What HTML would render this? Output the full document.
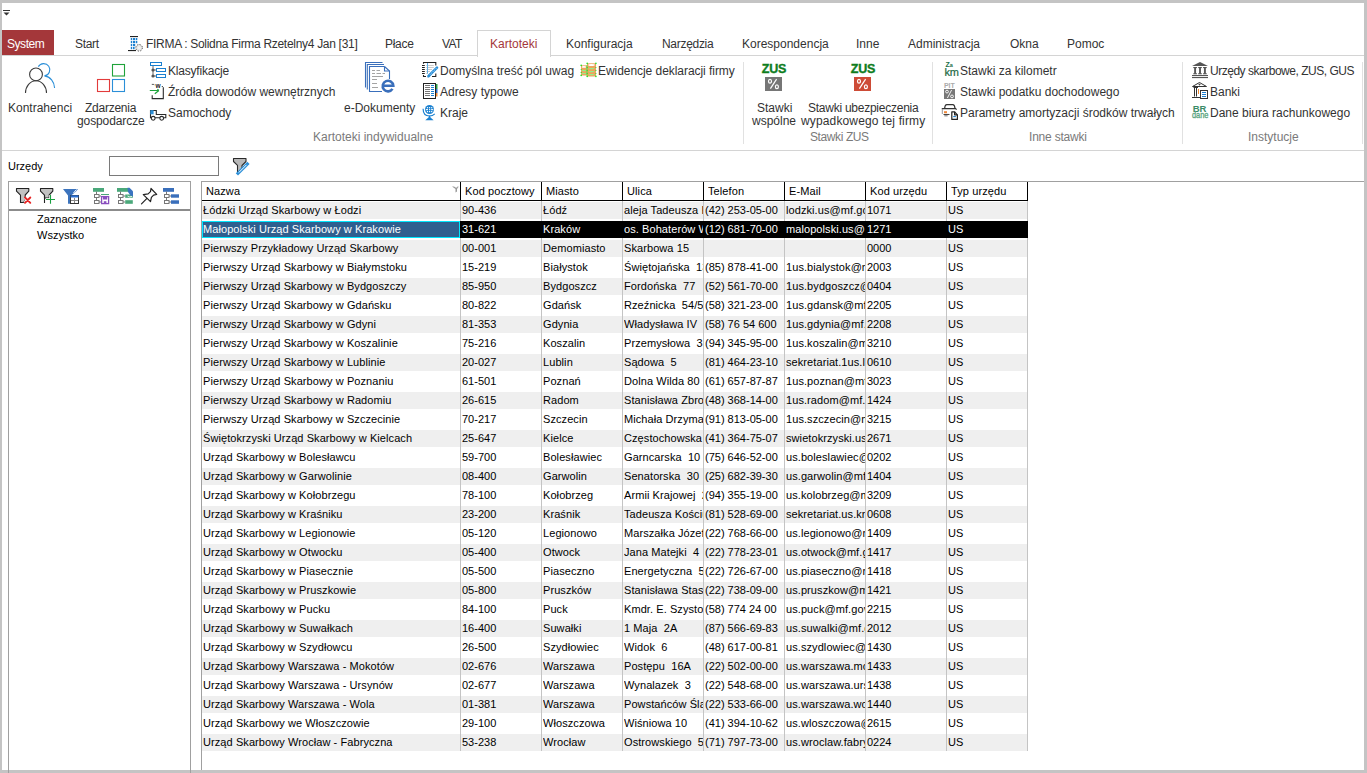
<!DOCTYPE html>
<html><head><meta charset="utf-8"><style>
*{margin:0;padding:0;box-sizing:content-box}
body{width:1367px;height:773px;position:relative;overflow:hidden;background:#fff;font-family:"Liberation Sans",sans-serif;color:#000}
.a{position:absolute}
.t{position:absolute;font-size:12px;line-height:14px;white-space:nowrap;color:#333}
.tab{position:absolute;top:37px;font-size:12px;line-height:14px;white-space:nowrap;color:#333}
.hc{position:absolute;top:185px;font-size:11px;line-height:13px;white-space:nowrap;overflow:hidden;letter-spacing:0.1px}
.c{position:absolute;height:17px;font-size:11px;line-height:17px;white-space:pre;overflow:hidden;letter-spacing:0.08px}
.c.n{letter-spacing:0}
.sep{position:absolute;top:62px;width:1px;height:82px;background:#e1e1e1}
.gl{position:absolute;top:130px;font-size:12px;line-height:14px;white-space:nowrap;color:#7a7a7a}
svg{position:absolute;overflow:visible}
</style></head><body>
<!-- frame -->
<div class="a" style="left:0;top:0;width:1367px;height:3px;background:#c4c4c4"></div>
<div class="a" style="left:0;top:0;width:2px;height:773px;background:#c4c4c4"></div>
<div class="a" style="left:1364px;top:0;width:3px;height:773px;background:#c4c4c4"></div>
<div class="a" style="left:0;top:770px;width:1367px;height:3px;background:#c4c4c4"></div>

<!-- quick access -->
<div class="a" style="left:3px;top:10px;width:7px;height:1px;background:#333"></div>
<svg style="left:3px;top:12px" width="7" height="4"><path d="M0.5 0.5 L6.5 0.5 L3.5 3.5 Z" fill="#333"/></svg>

<!-- tab strip -->
<div class="a" style="left:2px;top:55px;width:1362px;height:1px;background:#d4d4d4"></div>
<div class="a" style="left:2px;top:30px;width:52px;height:25px;background:#a4373a"></div>
<div class="tab" style="left:7px;color:#fff;letter-spacing:-0.45px">System</div>
<div class="tab" style="left:75px;letter-spacing:-0.3px">Start</div>
<div class="tab" style="left:146px;letter-spacing:-0.3px">FIRMA : Solidna Firma Rzetelny4 Jan [31]</div>
<div class="tab" style="left:385px;letter-spacing:-0.3px">Płace</div>
<div class="tab" style="left:442px;letter-spacing:-0.6px">VAT</div>
<div class="a" style="left:477px;top:30px;width:72px;height:26px;border:1px solid #d4d4d4;border-bottom:none;background:#fff"></div>
<div class="tab" style="left:490px;color:#a4373a">Kartoteki</div>
<div class="tab" style="left:566px">Konfiguracja</div>
<div class="tab" style="left:662px;letter-spacing:-0.3px">Narzędzia</div>
<div class="tab" style="left:742px">Korespondencja</div>
<div class="tab" style="left:856px">Inne</div>
<div class="tab" style="left:908px">Administracja</div>
<div class="tab" style="left:1010px">Okna</div>
<div class="tab" style="left:1067px">Pomoc</div>

<!-- ribbon -->
<div class="a" style="left:2px;top:150px;width:1362px;height:1px;background:#d4d4d4"></div>
<div class="t" style="left:8px;top:101px">Kontrahenci</div>
<div class="t" style="left:85px;top:101px;letter-spacing:-0.25px">Zdarzenia</div>
<div class="t" style="left:77px;top:114px;letter-spacing:-0.1px">gospodarcze</div>
<div class="t" style="left:168px;top:64px;letter-spacing:-0.2px">Klasyfikacje</div>
<div class="t" style="left:168px;top:85px">Źródła dowodów wewnętrznych</div>
<div class="t" style="left:168px;top:106px">Samochody</div>
<div class="t" style="left:344px;top:101px">e-Dokumenty</div>
<div class="t" style="left:440px;top:64px">Domyślna treść pól uwag</div>
<div class="t" style="left:440px;top:85px">Adresy typowe</div>
<div class="t" style="left:440px;top:106px">Kraje</div>
<div class="t" style="left:598px;top:64px;letter-spacing:-0.05px">Ewidencje deklaracji firmy</div>
<div class="gl" style="left:313px">Kartoteki indywidualne</div>
<div class="sep" style="left:743px"></div>
<div class="t" style="left:757px;top:101px">Stawki</div>
<div class="t" style="left:752px;top:114px">wspólne</div>
<div class="t" style="left:808px;top:101px;letter-spacing:-0.25px">Stawki ubezpieczenia</div>
<div class="t" style="left:801px;top:114px;letter-spacing:0.14px">wypadkowego tej firmy</div>
<div class="gl" style="left:810px;letter-spacing:-0.4px">Stawki ZUS</div>
<div class="sep" style="left:932px"></div>
<div class="t" style="left:960px;top:64px">Stawki za kilometr</div>
<div class="t" style="left:960px;top:85px">Stawki podatku dochodowego</div>
<div class="t" style="left:960px;top:106px">Parametry amortyzacji środków trwałych</div>
<div class="gl" style="left:1029px;letter-spacing:-0.2px">Inne stawki</div>
<div class="sep" style="left:1182px"></div>
<div class="t" style="left:1210px;top:64px;letter-spacing:-0.48px">Urzędy skarbowe, ZUS, GUS</div>
<div class="t" style="left:1210px;top:85px">Banki</div>
<div class="t" style="left:1210px;top:106px">Dane biura rachunkowego</div>
<div class="gl" style="left:1248px">Instytucje</div>
<div class="sep" style="left:1362px"></div>

<!-- filter row -->
<div class="a" style="left:8px;top:160px;font-size:11px;line-height:13px">Urzędy</div>
<div class="a" style="left:109px;top:156px;width:108px;height:18px;border:1px solid #7a7a7a;background:#fff"></div>

<!-- left panel -->
<div class="a" style="left:8px;top:181px;width:181px;height:600px;border:1px solid #a0a0a0;border-bottom:none"></div>
<div class="a" style="left:9px;top:209px;width:181px;height:2px;background:#8c8c8c"></div>
<div class="a" style="left:37px;top:212px;font-size:11px;line-height:14px">Zaznaczone</div>
<div class="a" style="left:37px;top:228px;font-size:11px;line-height:14px">Wszystko</div>

<!-- grid frame -->
<div class="a" style="left:201px;top:181px;width:1163px;height:1px;background:#a0a0a0"></div>
<div class="a" style="left:201px;top:181px;width:1px;height:589px;background:#a0a0a0"></div>
<div class="hc" style="left:206px;width:254px">Nazwa</div>
<div class="hc" style="left:465px;width:76px">Kod pocztowy</div>
<div class="hc" style="left:546px;width:76px">Miasto</div>
<div class="hc" style="left:627px;width:76px">Ulica</div>
<div class="hc" style="left:708px;width:76px">Telefon</div>
<div class="hc" style="left:789px;width:76px">E-Mail</div>
<div class="hc" style="left:870px;width:76px">Kod urzędu</div>
<div class="hc" style="left:951px;width:76px">Typ urzędu</div>
<div style="position:absolute;left:460px;top:182px;width:1px;height:19px;background:#000"></div>
<div style="position:absolute;left:541px;top:182px;width:1px;height:19px;background:#000"></div>
<div style="position:absolute;left:622px;top:182px;width:1px;height:19px;background:#000"></div>
<div style="position:absolute;left:703px;top:182px;width:1px;height:19px;background:#000"></div>
<div style="position:absolute;left:784px;top:182px;width:1px;height:19px;background:#000"></div>
<div style="position:absolute;left:865px;top:182px;width:1px;height:19px;background:#000"></div>
<div style="position:absolute;left:946px;top:182px;width:1px;height:19px;background:#000"></div>
<div style="position:absolute;left:1027px;top:182px;width:1px;height:19px;background:#000"></div>
<div style="position:absolute;left:202px;top:200px;width:826px;height:1px;background:#000"></div>
<div style="position:absolute;left:202px;top:202px;width:825px;height:17px;background:#efefef"></div>
<div class="c" style="left:203px;top:202px;width:257px;">Łódzki Urząd Skarbowy w Łodzi</div>
<div class="c n" style="left:462px;top:202px;width:79px;">90-436</div>
<div class="c" style="left:543px;top:202px;width:79px;">Łódź</div>
<div class="c" style="left:624px;top:202px;width:79px;">aleja Tadeusza Kościuszki 83</div>
<div class="c n" style="left:705px;top:202px;width:79px;">(42) 253-05-00</div>
<div class="c" style="left:786px;top:202px;width:79px;">lodzki.us@mf.gov.pl</div>
<div class="c n" style="left:867px;top:202px;width:79px;">1071</div>
<div class="c n" style="left:948px;top:202px;width:79px;">US</div>
<div style="position:absolute;left:460px;top:221px;width:568px;height:17px;background:#000"></div>
<div style="position:absolute;left:202px;top:221px;width:256px;height:15px;background:#2f5f8f;border:1px solid #00e8ff"></div>
<div class="c" style="left:203px;top:221px;width:257px;color:#fff;">Małopolski Urząd Skarbowy w Krakowie</div>
<div class="c n" style="left:462px;top:221px;width:79px;color:#fff;">31-621</div>
<div class="c" style="left:543px;top:221px;width:79px;color:#fff;">Kraków</div>
<div class="c" style="left:624px;top:221px;width:79px;color:#fff;">os. Bohaterów Września 20</div>
<div class="c n" style="left:705px;top:221px;width:79px;color:#fff;">(12) 681-70-00</div>
<div class="c" style="left:786px;top:221px;width:79px;color:#fff;">malopolski.us@mf.gov.pl</div>
<div class="c n" style="left:867px;top:221px;width:79px;color:#fff;">1271</div>
<div class="c n" style="left:948px;top:221px;width:79px;color:#fff;">US</div>
<div style="position:absolute;left:202px;top:240px;width:825px;height:17px;background:#efefef"></div>
<div class="c" style="left:203px;top:240px;width:257px;">Pierwszy Przykładowy Urząd Skarbowy</div>
<div class="c n" style="left:462px;top:240px;width:79px;">00-001</div>
<div class="c" style="left:543px;top:240px;width:79px;">Demomiasto</div>
<div class="c" style="left:624px;top:240px;width:79px;">Skarbowa 15</div>
<div class="c n" style="left:705px;top:240px;width:79px;"></div>
<div class="c" style="left:786px;top:240px;width:79px;"></div>
<div class="c n" style="left:867px;top:240px;width:79px;">0000</div>
<div class="c n" style="left:948px;top:240px;width:79px;">US</div>
<div class="c" style="left:203px;top:259px;width:257px;">Pierwszy Urząd Skarbowy w Białymstoku</div>
<div class="c n" style="left:462px;top:259px;width:79px;">15-219</div>
<div class="c" style="left:543px;top:259px;width:79px;">Białystok</div>
<div class="c" style="left:624px;top:259px;width:79px;">Świętojańska  13</div>
<div class="c n" style="left:705px;top:259px;width:79px;">(85) 878-41-00</div>
<div class="c" style="left:786px;top:259px;width:79px;">1us.bialystok@mf.gov.pl</div>
<div class="c n" style="left:867px;top:259px;width:79px;">2003</div>
<div class="c n" style="left:948px;top:259px;width:79px;">US</div>
<div style="position:absolute;left:202px;top:278px;width:825px;height:17px;background:#efefef"></div>
<div class="c" style="left:203px;top:278px;width:257px;">Pierwszy Urząd Skarbowy w Bydgoszczy</div>
<div class="c n" style="left:462px;top:278px;width:79px;">85-950</div>
<div class="c" style="left:543px;top:278px;width:79px;">Bydgoszcz</div>
<div class="c" style="left:624px;top:278px;width:79px;">Fordońska  77</div>
<div class="c n" style="left:705px;top:278px;width:79px;">(52) 561-70-00</div>
<div class="c" style="left:786px;top:278px;width:79px;">1us.bydgoszcz@mf.gov.pl</div>
<div class="c n" style="left:867px;top:278px;width:79px;">0404</div>
<div class="c n" style="left:948px;top:278px;width:79px;">US</div>
<div class="c" style="left:203px;top:297px;width:257px;">Pierwszy Urząd Skarbowy w Gdańsku</div>
<div class="c n" style="left:462px;top:297px;width:79px;">80-822</div>
<div class="c" style="left:543px;top:297px;width:79px;">Gdańsk</div>
<div class="c" style="left:624px;top:297px;width:79px;">Rzeźnicka  54/56</div>
<div class="c n" style="left:705px;top:297px;width:79px;">(58) 321-23-00</div>
<div class="c" style="left:786px;top:297px;width:79px;">1us.gdansk@mf.gov.pl</div>
<div class="c n" style="left:867px;top:297px;width:79px;">2205</div>
<div class="c n" style="left:948px;top:297px;width:79px;">US</div>
<div style="position:absolute;left:202px;top:316px;width:825px;height:17px;background:#efefef"></div>
<div class="c" style="left:203px;top:316px;width:257px;">Pierwszy Urząd Skarbowy w Gdyni</div>
<div class="c n" style="left:462px;top:316px;width:79px;">81-353</div>
<div class="c" style="left:543px;top:316px;width:79px;">Gdynia</div>
<div class="c" style="left:624px;top:316px;width:79px;">Władysława IV</div>
<div class="c n" style="left:705px;top:316px;width:79px;">(58) 76 54 600</div>
<div class="c" style="left:786px;top:316px;width:79px;">1us.gdynia@mf.gov.pl</div>
<div class="c n" style="left:867px;top:316px;width:79px;">2208</div>
<div class="c n" style="left:948px;top:316px;width:79px;">US</div>
<div class="c" style="left:203px;top:335px;width:257px;">Pierwszy Urząd Skarbowy w Koszalinie</div>
<div class="c n" style="left:462px;top:335px;width:79px;">75-216</div>
<div class="c" style="left:543px;top:335px;width:79px;">Koszalin</div>
<div class="c" style="left:624px;top:335px;width:79px;">Przemysłowa  3</div>
<div class="c n" style="left:705px;top:335px;width:79px;">(94) 345-95-00</div>
<div class="c" style="left:786px;top:335px;width:79px;">1us.koszalin@mf.gov.pl</div>
<div class="c n" style="left:867px;top:335px;width:79px;">3210</div>
<div class="c n" style="left:948px;top:335px;width:79px;">US</div>
<div style="position:absolute;left:202px;top:354px;width:825px;height:17px;background:#efefef"></div>
<div class="c" style="left:203px;top:354px;width:257px;">Pierwszy Urząd Skarbowy w Lublinie</div>
<div class="c n" style="left:462px;top:354px;width:79px;">20-027</div>
<div class="c" style="left:543px;top:354px;width:79px;">Lublin</div>
<div class="c" style="left:624px;top:354px;width:79px;">Sądowa  5</div>
<div class="c n" style="left:705px;top:354px;width:79px;">(81) 464-23-10</div>
<div class="c" style="left:786px;top:354px;width:79px;">sekretariat.1us.lublin@mf.gov.pl</div>
<div class="c n" style="left:867px;top:354px;width:79px;">0610</div>
<div class="c n" style="left:948px;top:354px;width:79px;">US</div>
<div class="c" style="left:203px;top:373px;width:257px;">Pierwszy Urząd Skarbowy w Poznaniu</div>
<div class="c n" style="left:462px;top:373px;width:79px;">61-501</div>
<div class="c" style="left:543px;top:373px;width:79px;">Poznań</div>
<div class="c" style="left:624px;top:373px;width:79px;">Dolna Wilda 80</div>
<div class="c n" style="left:705px;top:373px;width:79px;">(61) 657-87-87</div>
<div class="c" style="left:786px;top:373px;width:79px;">1us.poznan@mf.gov.pl</div>
<div class="c n" style="left:867px;top:373px;width:79px;">3023</div>
<div class="c n" style="left:948px;top:373px;width:79px;">US</div>
<div style="position:absolute;left:202px;top:392px;width:825px;height:17px;background:#efefef"></div>
<div class="c" style="left:203px;top:392px;width:257px;">Pierwszy Urząd Skarbowy w Radomiu</div>
<div class="c n" style="left:462px;top:392px;width:79px;">26-615</div>
<div class="c" style="left:543px;top:392px;width:79px;">Radom</div>
<div class="c" style="left:624px;top:392px;width:79px;">Stanisława Zbrożka</div>
<div class="c n" style="left:705px;top:392px;width:79px;">(48) 368-14-00</div>
<div class="c" style="left:786px;top:392px;width:79px;">1us.radom@mf.gov.pl</div>
<div class="c n" style="left:867px;top:392px;width:79px;">1424</div>
<div class="c n" style="left:948px;top:392px;width:79px;">US</div>
<div class="c" style="left:203px;top:411px;width:257px;">Pierwszy Urząd Skarbowy w Szczecinie</div>
<div class="c n" style="left:462px;top:411px;width:79px;">70-217</div>
<div class="c" style="left:543px;top:411px;width:79px;">Szczecin</div>
<div class="c" style="left:624px;top:411px;width:79px;">Michała Drzymały</div>
<div class="c n" style="left:705px;top:411px;width:79px;">(91) 813-05-00</div>
<div class="c" style="left:786px;top:411px;width:79px;">1us.szczecin@mf.gov.pl</div>
<div class="c n" style="left:867px;top:411px;width:79px;">3215</div>
<div class="c n" style="left:948px;top:411px;width:79px;">US</div>
<div style="position:absolute;left:202px;top:430px;width:825px;height:17px;background:#efefef"></div>
<div class="c" style="left:203px;top:430px;width:257px;">Świętokrzyski Urząd Skarbowy w Kielcach</div>
<div class="c n" style="left:462px;top:430px;width:79px;">25-647</div>
<div class="c" style="left:543px;top:430px;width:79px;">Kielce</div>
<div class="c" style="left:624px;top:430px;width:79px;">Częstochowska</div>
<div class="c n" style="left:705px;top:430px;width:79px;">(41) 364-75-07</div>
<div class="c" style="left:786px;top:430px;width:79px;">swietokrzyski.us@mf.gov.pl</div>
<div class="c n" style="left:867px;top:430px;width:79px;">2671</div>
<div class="c n" style="left:948px;top:430px;width:79px;">US</div>
<div class="c" style="left:203px;top:449px;width:257px;">Urząd Skarbowy w Bolesławcu</div>
<div class="c n" style="left:462px;top:449px;width:79px;">59-700</div>
<div class="c" style="left:543px;top:449px;width:79px;">Bolesławiec</div>
<div class="c" style="left:624px;top:449px;width:79px;">Garncarska  10</div>
<div class="c n" style="left:705px;top:449px;width:79px;">(75) 646-52-00</div>
<div class="c" style="left:786px;top:449px;width:79px;">us.boleslawiec@mf.gov.pl</div>
<div class="c n" style="left:867px;top:449px;width:79px;">0202</div>
<div class="c n" style="left:948px;top:449px;width:79px;">US</div>
<div style="position:absolute;left:202px;top:468px;width:825px;height:17px;background:#efefef"></div>
<div class="c" style="left:203px;top:468px;width:257px;">Urząd Skarbowy w Garwolinie</div>
<div class="c n" style="left:462px;top:468px;width:79px;">08-400</div>
<div class="c" style="left:543px;top:468px;width:79px;">Garwolin</div>
<div class="c" style="left:624px;top:468px;width:79px;">Senatorska  30</div>
<div class="c n" style="left:705px;top:468px;width:79px;">(25) 682-39-30</div>
<div class="c" style="left:786px;top:468px;width:79px;">us.garwolin@mf.gov.pl</div>
<div class="c n" style="left:867px;top:468px;width:79px;">1404</div>
<div class="c n" style="left:948px;top:468px;width:79px;">US</div>
<div class="c" style="left:203px;top:487px;width:257px;">Urząd Skarbowy w Kołobrzegu</div>
<div class="c n" style="left:462px;top:487px;width:79px;">78-100</div>
<div class="c" style="left:543px;top:487px;width:79px;">Kołobrzeg</div>
<div class="c" style="left:624px;top:487px;width:79px;">Armii Krajowej  2</div>
<div class="c n" style="left:705px;top:487px;width:79px;">(94) 355-19-00</div>
<div class="c" style="left:786px;top:487px;width:79px;">us.kolobrzeg@mf.gov.pl</div>
<div class="c n" style="left:867px;top:487px;width:79px;">3209</div>
<div class="c n" style="left:948px;top:487px;width:79px;">US</div>
<div style="position:absolute;left:202px;top:506px;width:825px;height:17px;background:#efefef"></div>
<div class="c" style="left:203px;top:506px;width:257px;">Urząd Skarbowy w Kraśniku</div>
<div class="c n" style="left:462px;top:506px;width:79px;">23-200</div>
<div class="c" style="left:543px;top:506px;width:79px;">Kraśnik</div>
<div class="c" style="left:624px;top:506px;width:79px;">Tadeusza Kościuszki</div>
<div class="c n" style="left:705px;top:506px;width:79px;">(81) 528-69-00</div>
<div class="c" style="left:786px;top:506px;width:79px;">sekretariat.us.krasnik@mf.gov.pl</div>
<div class="c n" style="left:867px;top:506px;width:79px;">0608</div>
<div class="c n" style="left:948px;top:506px;width:79px;">US</div>
<div class="c" style="left:203px;top:525px;width:257px;">Urząd Skarbowy w Legionowie</div>
<div class="c n" style="left:462px;top:525px;width:79px;">05-120</div>
<div class="c" style="left:543px;top:525px;width:79px;">Legionowo</div>
<div class="c" style="left:624px;top:525px;width:79px;">Marszałka Józefa Piłsudskiego</div>
<div class="c n" style="left:705px;top:525px;width:79px;">(22) 768-66-00</div>
<div class="c" style="left:786px;top:525px;width:79px;">us.legionowo@mf.gov.pl</div>
<div class="c n" style="left:867px;top:525px;width:79px;">1409</div>
<div class="c n" style="left:948px;top:525px;width:79px;">US</div>
<div style="position:absolute;left:202px;top:544px;width:825px;height:17px;background:#efefef"></div>
<div class="c" style="left:203px;top:544px;width:257px;">Urząd Skarbowy w Otwocku</div>
<div class="c n" style="left:462px;top:544px;width:79px;">05-400</div>
<div class="c" style="left:543px;top:544px;width:79px;">Otwock</div>
<div class="c" style="left:624px;top:544px;width:79px;">Jana Matejki  4</div>
<div class="c n" style="left:705px;top:544px;width:79px;">(22) 778-23-01</div>
<div class="c" style="left:786px;top:544px;width:79px;">us.otwock@mf.gov.pl</div>
<div class="c n" style="left:867px;top:544px;width:79px;">1417</div>
<div class="c n" style="left:948px;top:544px;width:79px;">US</div>
<div class="c" style="left:203px;top:563px;width:257px;">Urząd Skarbowy w Piasecznie</div>
<div class="c n" style="left:462px;top:563px;width:79px;">05-500</div>
<div class="c" style="left:543px;top:563px;width:79px;">Piaseczno</div>
<div class="c" style="left:624px;top:563px;width:79px;">Energetyczna  5</div>
<div class="c n" style="left:705px;top:563px;width:79px;">(22) 726-67-00</div>
<div class="c" style="left:786px;top:563px;width:79px;">us.piaseczno@mf.gov.pl</div>
<div class="c n" style="left:867px;top:563px;width:79px;">1418</div>
<div class="c n" style="left:948px;top:563px;width:79px;">US</div>
<div style="position:absolute;left:202px;top:582px;width:825px;height:17px;background:#efefef"></div>
<div class="c" style="left:203px;top:582px;width:257px;">Urząd Skarbowy w Pruszkowie</div>
<div class="c n" style="left:462px;top:582px;width:79px;">05-800</div>
<div class="c" style="left:543px;top:582px;width:79px;">Pruszków</div>
<div class="c" style="left:624px;top:582px;width:79px;">Stanisława Staszica</div>
<div class="c n" style="left:705px;top:582px;width:79px;">(22) 738-09-00</div>
<div class="c" style="left:786px;top:582px;width:79px;">us.pruszkow@mf.gov.pl</div>
<div class="c n" style="left:867px;top:582px;width:79px;">1421</div>
<div class="c n" style="left:948px;top:582px;width:79px;">US</div>
<div class="c" style="left:203px;top:601px;width:257px;">Urząd Skarbowy w Pucku</div>
<div class="c n" style="left:462px;top:601px;width:79px;">84-100</div>
<div class="c" style="left:543px;top:601px;width:79px;">Puck</div>
<div class="c" style="left:624px;top:601px;width:79px;">Kmdr. E. Szystowskiego</div>
<div class="c n" style="left:705px;top:601px;width:79px;">(58) 774 24 00</div>
<div class="c" style="left:786px;top:601px;width:79px;">us.puck@mf.gov.pl</div>
<div class="c n" style="left:867px;top:601px;width:79px;">2215</div>
<div class="c n" style="left:948px;top:601px;width:79px;">US</div>
<div style="position:absolute;left:202px;top:620px;width:825px;height:17px;background:#efefef"></div>
<div class="c" style="left:203px;top:620px;width:257px;">Urząd Skarbowy w Suwałkach</div>
<div class="c n" style="left:462px;top:620px;width:79px;">16-400</div>
<div class="c" style="left:543px;top:620px;width:79px;">Suwałki</div>
<div class="c" style="left:624px;top:620px;width:79px;">1 Maja  2A</div>
<div class="c n" style="left:705px;top:620px;width:79px;">(87) 566-69-83</div>
<div class="c" style="left:786px;top:620px;width:79px;">us.suwalki@mf.gov.pl</div>
<div class="c n" style="left:867px;top:620px;width:79px;">2012</div>
<div class="c n" style="left:948px;top:620px;width:79px;">US</div>
<div class="c" style="left:203px;top:639px;width:257px;">Urząd Skarbowy w Szydłowcu</div>
<div class="c n" style="left:462px;top:639px;width:79px;">26-500</div>
<div class="c" style="left:543px;top:639px;width:79px;">Szydłowiec</div>
<div class="c" style="left:624px;top:639px;width:79px;">Widok  6</div>
<div class="c n" style="left:705px;top:639px;width:79px;">(48) 617-00-81</div>
<div class="c" style="left:786px;top:639px;width:79px;">us.szydlowiec@mf.gov.pl</div>
<div class="c n" style="left:867px;top:639px;width:79px;">1430</div>
<div class="c n" style="left:948px;top:639px;width:79px;">US</div>
<div style="position:absolute;left:202px;top:658px;width:825px;height:17px;background:#efefef"></div>
<div class="c" style="left:203px;top:658px;width:257px;">Urząd Skarbowy Warszawa - Mokotów</div>
<div class="c n" style="left:462px;top:658px;width:79px;">02-676</div>
<div class="c" style="left:543px;top:658px;width:79px;">Warszawa</div>
<div class="c" style="left:624px;top:658px;width:79px;">Postępu  16A</div>
<div class="c n" style="left:705px;top:658px;width:79px;">(22) 502-00-00</div>
<div class="c" style="left:786px;top:658px;width:79px;">us.warszawa.mokotow@mf.gov.pl</div>
<div class="c n" style="left:867px;top:658px;width:79px;">1433</div>
<div class="c n" style="left:948px;top:658px;width:79px;">US</div>
<div class="c" style="left:203px;top:677px;width:257px;">Urząd Skarbowy Warszawa - Ursynów</div>
<div class="c n" style="left:462px;top:677px;width:79px;">02-677</div>
<div class="c" style="left:543px;top:677px;width:79px;">Warszawa</div>
<div class="c" style="left:624px;top:677px;width:79px;">Wynalazek  3</div>
<div class="c n" style="left:705px;top:677px;width:79px;">(22) 548-68-00</div>
<div class="c" style="left:786px;top:677px;width:79px;">us.warszawa.ursynow@mf.gov.pl</div>
<div class="c n" style="left:867px;top:677px;width:79px;">1438</div>
<div class="c n" style="left:948px;top:677px;width:79px;">US</div>
<div style="position:absolute;left:202px;top:696px;width:825px;height:17px;background:#efefef"></div>
<div class="c" style="left:203px;top:696px;width:257px;">Urząd Skarbowy Warszawa - Wola</div>
<div class="c n" style="left:462px;top:696px;width:79px;">01-381</div>
<div class="c" style="left:543px;top:696px;width:79px;">Warszawa</div>
<div class="c" style="left:624px;top:696px;width:79px;">Powstańców Śląskich</div>
<div class="c n" style="left:705px;top:696px;width:79px;">(22) 533-66-00</div>
<div class="c" style="left:786px;top:696px;width:79px;">us.warszawa.wola@mf.gov.pl</div>
<div class="c n" style="left:867px;top:696px;width:79px;">1440</div>
<div class="c n" style="left:948px;top:696px;width:79px;">US</div>
<div class="c" style="left:203px;top:715px;width:257px;">Urząd Skarbowy we Włoszczowie</div>
<div class="c n" style="left:462px;top:715px;width:79px;">29-100</div>
<div class="c" style="left:543px;top:715px;width:79px;">Włoszczowa</div>
<div class="c" style="left:624px;top:715px;width:79px;">Wiśniowa 10</div>
<div class="c n" style="left:705px;top:715px;width:79px;">(41) 394-10-62</div>
<div class="c" style="left:786px;top:715px;width:79px;">us.wloszczowa@mf.gov.pl</div>
<div class="c n" style="left:867px;top:715px;width:79px;">2615</div>
<div class="c n" style="left:948px;top:715px;width:79px;">US</div>
<div style="position:absolute;left:202px;top:734px;width:825px;height:17px;background:#efefef"></div>
<div class="c" style="left:203px;top:734px;width:257px;">Urząd Skarbowy Wrocław - Fabryczna</div>
<div class="c n" style="left:462px;top:734px;width:79px;">53-238</div>
<div class="c" style="left:543px;top:734px;width:79px;">Wrocław</div>
<div class="c" style="left:624px;top:734px;width:79px;">Ostrowskiego  5</div>
<div class="c n" style="left:705px;top:734px;width:79px;">(71) 797-73-00</div>
<div class="c" style="left:786px;top:734px;width:79px;">us.wroclaw.fabryczna@mf.gov.pl</div>
<div class="c n" style="left:867px;top:734px;width:79px;">0224</div>
<div class="c n" style="left:948px;top:734px;width:79px;">US</div>
<div style="position:absolute;left:460px;top:201px;width:1px;height:20px;background:#c4c4c4"></div>
<div style="position:absolute;left:460px;top:238px;width:1px;height:513px;background:#c4c4c4"></div>
<div style="position:absolute;left:541px;top:201px;width:1px;height:20px;background:#c4c4c4"></div>
<div style="position:absolute;left:541px;top:238px;width:1px;height:513px;background:#c4c4c4"></div>
<div style="position:absolute;left:622px;top:201px;width:1px;height:20px;background:#c4c4c4"></div>
<div style="position:absolute;left:622px;top:238px;width:1px;height:513px;background:#c4c4c4"></div>
<div style="position:absolute;left:703px;top:201px;width:1px;height:20px;background:#c4c4c4"></div>
<div style="position:absolute;left:703px;top:238px;width:1px;height:513px;background:#c4c4c4"></div>
<div style="position:absolute;left:784px;top:201px;width:1px;height:20px;background:#c4c4c4"></div>
<div style="position:absolute;left:784px;top:238px;width:1px;height:513px;background:#c4c4c4"></div>
<div style="position:absolute;left:865px;top:201px;width:1px;height:20px;background:#c4c4c4"></div>
<div style="position:absolute;left:865px;top:238px;width:1px;height:513px;background:#c4c4c4"></div>
<div style="position:absolute;left:946px;top:201px;width:1px;height:20px;background:#c4c4c4"></div>
<div style="position:absolute;left:946px;top:238px;width:1px;height:513px;background:#c4c4c4"></div>
<div style="position:absolute;left:1027px;top:201px;width:1px;height:20px;background:#c4c4c4"></div>
<div style="position:absolute;left:1027px;top:238px;width:1px;height:513px;background:#c4c4c4"></div>

<!-- tab building icon -->
<svg style="left:124px;top:32px" width="22" height="22" viewBox="0 0 22 22">
 <rect x="6" y="4" width="8" height="1.1" fill="#222"/>
 <g fill="#1a7fd0">
  <rect x="6.8" y="6" width="1.4" height="2.2"/><rect x="9" y="6" width="2.2" height="2.2"/><rect x="11.9" y="6" width="1.4" height="2.2"/>
  <rect x="6.8" y="9" width="1.4" height="2.2"/><rect x="9" y="9" width="2.2" height="2.2"/><rect x="11.9" y="9" width="1.4" height="2.2"/>
  <rect x="6.8" y="12" width="1.4" height="2.2"/><rect x="9" y="12" width="2.2" height="2.2"/>
  <rect x="6.8" y="15" width="1.4" height="2.2"/><rect x="9" y="15" width="1.6" height="2.2"/>
 </g>
 <rect x="4" y="18" width="8" height="1.1" fill="#222"/>
 <circle cx="15.1" cy="15.8" r="3.3" fill="#e4e4e4" stroke="#555" stroke-width="1" stroke-dasharray="1.3 1.3"/>
 <circle cx="15.1" cy="15.8" r="1.6" fill="#f4f4f4"/>
</svg>

<!-- Kontrahenci -->
<svg style="left:0;top:0" width="60" height="100">
 <g fill="none" stroke-width="1.1">
  <path d="M38.3 66.6 A6.2 6.2 0 1 1 44.6 75.9" stroke="#2b8fd8"/>
  <path d="M44.6 75.9 A 11 12.5 0 0 1 54.6 88" stroke="#2b8fd8"/>
  <circle cx="36" cy="74.4" r="6.4" stroke="#3c3c3c"/>
  <path d="M25.5 93 A 10.5 12.3 0 0 1 46.5 93" stroke="#3c3c3c"/>
 </g>
</svg>

<!-- Zdarzenia -->
<svg style="left:0;top:0" width="140" height="100">
 <g fill="none" stroke-width="1.1">
  <rect x="112.5" y="64.5" width="12" height="11.5" stroke="#1fa33a"/>
  <rect x="97.5" y="79.5" width="12" height="12" stroke="#e23b3b"/>
  <rect x="112.5" y="79.5" width="12" height="12" stroke="#2b8fd8"/>
 </g>
</svg>

<!-- Klasyfikacje -->
<svg style="left:148px;top:60px" width="20" height="20">
 <g fill="none" stroke="#1a7fd0" stroke-width="1">
  <rect x="2.5" y="2.5" width="11" height="3"/>
  <rect x="8.5" y="8.5" width="9" height="3"/>
  <rect x="8.5" y="14.5" width="9" height="3"/>
 </g>
 <path d="M5 6 V17" stroke="#666" stroke-width="1"/>
 <path d="M5 10 H8 M5 16 H8" stroke="#666" stroke-width="1"/>
 <circle cx="5" cy="10" r="1.6" fill="#555"/><circle cx="5" cy="16" r="1.6" fill="#555"/>
</svg>

<!-- Zrodla -->
<svg style="left:148px;top:82px" width="20" height="20">
 <path d="M15.3 5.5 V16.6 H4.2 V13.3" fill="none" stroke="#2a2a2a" stroke-width="1.1"/>
 <path d="M13.8 4 L15.3 5.5" stroke="#2a2a2a" stroke-width="1"/>
 <path d="M3.8 2.4 H5.8 L6.5 3.2" fill="none" stroke="#333" stroke-width="0.8"/>
 <text x="7.6" y="5.6" font-family="Liberation Sans" font-size="6.5" font-weight="bold" fill="#222">w</text>
 <path d="M1.8 8.5 H10.9 M10.9 8.5 L9.4 7.2 M10.9 8.5 L6.8 11.8" fill="none" stroke="#1ea33c" stroke-width="1.2"/>
</svg>

<!-- Samochody -->
<svg style="left:148px;top:108px" width="20" height="14">
 <path d="M2.5 9.8 V2.5 H8.3 V6.5 H17.8 V9.8 Z" fill="#fff" stroke="#2a2a2a" stroke-width="1.1"/>
 <rect x="2.3" y="2.2" width="3.3" height="4.1" fill="#2b8fd8"/>
 <circle cx="5.2" cy="10.3" r="1.9" fill="#fff" stroke="#2a2a2a" stroke-width="1.1"/>
 <circle cx="13.7" cy="10.3" r="1.9" fill="#fff" stroke="#2a2a2a" stroke-width="1.1"/>
</svg>

<!-- e-Dokumenty -->
<svg style="left:362px;top:60px" width="36" height="36">
 <g fill="none" stroke="#3a6fbb" stroke-width="1.1">
  <path d="M3.5 27.5 V2.5 H20.5"/>
  <path d="M5.3 29.5 V4.5 H22"/>
  <path d="M22.5 6.5 H7.5 V31.5 H20"/>
  <path d="M22.5 6.5 L27.5 11 V19"/>
  <path d="M22.5 6.5 V11 H27.5"/>
 </g>
 <g stroke="#9a9a9a" stroke-width="0.9">
  <path d="M10 10.5 H13 M14.5 10.5 H18"/>
  <path d="M10 13.5 H13 M14.5 13.5 H19 M20.5 13.5 H23"/>
  <path d="M10 16.5 H21"/>
  <path d="M10 19.5 H15"/>
  <path d="M10 23.5 H15"/>
  <path d="M10 27.5 H16"/>
 </g>
 <circle cx="26" cy="26" r="7" fill="#fff"/>
 <path d="M20.7 25.8 H31.3 A5.3 5.3 0 1 0 30.5 28.9" fill="none" stroke="#3a6fbb" stroke-width="2.6"/>
</svg>

<!-- Domyslna -->
<svg style="left:420px;top:60px" width="20" height="20">
 <path d="M3.5 3.8 V2.5 H15.8 V5.5 M3.5 15 V16.5 H6 M12 16.5 H15.8 V13.5" fill="none" stroke="#222" stroke-width="1.1"/>
 <g stroke="#222" stroke-width="1.1"><path d="M2 5.5 H4.8 M2 7.5 H4.8 M2 9.5 H4.8 M2 11.5 H4.8 M2 13.5 H4.8"/></g>
 <g stroke="#c4c4c4" stroke-width="0.9"><path d="M6.3 5.5 H13.8 M6.3 7.5 H13.8 M6.3 9.5 H12 M6.3 11.5 H10 M6.3 13.5 H8"/></g>
 <path d="M7.5 3 V13.5" stroke="#5aaee8" stroke-width="1"/>
 <path d="M8.6 16 L17 7.6" stroke="#2b8fd8" stroke-width="2.6" stroke-linecap="round"/>
 <path d="M7.3 17.6 L8 15 L10 16.9 Z" fill="#2b8fd8"/>
 <path d="M10 14.6 L16.3 8.3" stroke="#fff" stroke-width="0.8" stroke-dasharray="0.9 1.1"/>
</svg>

<!-- Adresy -->
<svg style="left:420px;top:81px" width="20" height="20">
 <rect x="3.5" y="2.5" width="12" height="15" fill="#fff" stroke="#222" stroke-width="1"/>
 <g stroke="#777" stroke-width="1"><path d="M5 4.5 H10 M5 6.5 H10 M5 8.5 H10 M5 10.5 H10 M5 12.5 H10 M5 14.5 H10"/></g>
 <g stroke="#1a7fd0" stroke-width="1"><path d="M11 4.5 H14 M11 6.5 H14 M11 8.5 H14 M11 10.5 H14 M11 12.5 H14 M11 14.5 H14"/></g>
 <rect x="16" y="3" width="1.5" height="5" fill="#2aa048"/>
 <rect x="16" y="8" width="1.5" height="4" fill="#2b6fd0"/>
 <rect x="16" y="12" width="1.5" height="3.5" fill="#f08a30"/>
</svg>

<!-- Kraje -->
<svg style="left:420px;top:103px" width="18" height="19">
 <circle cx="9.5" cy="6.5" r="4.5" fill="#1a80d0"/>
 <g fill="#fff">
  <rect x="6.9" y="4.1" width="1.2" height="1.2"/><rect x="9" y="4.1" width="1.2" height="1.2"/><rect x="11.1" y="4.1" width="1.2" height="1.2"/>
  <rect x="5.8" y="6.1" width="2.2" height="1.1"/><rect x="9" y="6.1" width="1.2" height="1.1"/><rect x="11.1" y="6.1" width="2.2" height="1.1"/>
  <rect x="6.9" y="8" width="1.2" height="1.2"/><rect x="9" y="8" width="1.2" height="1.2"/><rect x="11.1" y="8" width="1.2" height="1.2"/>
 </g>
 <path d="M3.1 5.8 Q3.1 13 9.5 13 Q12.6 13 14.8 10.9" fill="none" stroke="#1a80d0" stroke-width="1.2"/>
 <path d="M9.5 12.6 V14.5" stroke="#1a80d0" stroke-width="1.4"/>
 <path d="M5.3 17.2 L13.6 17.2 L9.5 13.6 Z" fill="#1a80d0"/>
</svg>

<!-- Ewidencje -->
<svg style="left:580px;top:62px" width="18" height="17">
  <rect x="1" y="3.3" width="5.8" height="10.2" fill="#eda55e"/>
  <rect x="7" y="1.3" width="9" height="13.2" fill="#eda55e"/>
  <ellipse cx="3.9" cy="4.9" rx="2.2" ry="0.9" fill="#fff"/>
  <ellipse cx="11.5" cy="3" rx="3.3" ry="1" fill="#fff"/>
  <g fill="#8ef58e"><ellipse cx="3.9" cy="8.6" rx="2.3" ry="0.6"/><ellipse cx="3.9" cy="11.5" rx="2.3" ry="0.6"/>
  <ellipse cx="11.5" cy="6.6" rx="3.2" ry="0.6"/><ellipse cx="11.5" cy="9.6" rx="3.2" ry="0.6"/><ellipse cx="11.5" cy="12.6" rx="3.2" ry="0.6"/></g>
  <path d="M6.9 3.3 V13.5" stroke="#3ee03e" stroke-width="0.9"/>
  <g fill="#22e022">
  <circle cx="1.2" cy="3.4" r="0.8"/><circle cx="1.2" cy="13.4" r="0.8"/><circle cx="1.2" cy="7.5" r="0.6"/><circle cx="1.2" cy="10.4" r="0.6"/>
  <circle cx="7.2" cy="1.4" r="0.8"/><circle cx="15.9" cy="1.4" r="0.8"/><circle cx="7.2" cy="14.4" r="0.8"/><circle cx="15.9" cy="14.4" r="0.8"/>
  <circle cx="15.9" cy="5.5" r="0.6"/><circle cx="15.9" cy="8.5" r="0.6"/><circle cx="15.9" cy="11.5" r="0.6"/>
  <circle cx="7.2" cy="5.5" r="0.6"/><circle cx="7.2" cy="8.5" r="0.6"/><circle cx="7.2" cy="11.5" r="0.6"/>
  </g>
</svg>

<!-- ZUS icons -->
<div class="a" style="left:760px;top:62px;width:28px;font:bold 12.5px/14px 'Liberation Sans',sans-serif;color:#0f7d1e;text-align:center;-webkit-text-stroke:0.35px #0f7d1e;letter-spacing:-0.2px">ZUS</div>
<svg style="left:765px;top:77px" width="17" height="14">
 <rect x="0" y="0" width="17" height="14" fill="#767676"/>
 <ellipse cx="5" cy="4.3" rx="1.5" ry="1.9" fill="none" stroke="#fff" stroke-width="1.2"/>
 <ellipse cx="11.9" cy="9.8" rx="1.5" ry="1.9" fill="none" stroke="#fff" stroke-width="1.2"/>
 <path d="M11.6 2.2 L5.4 11.6" stroke="#fff" stroke-width="1.2"/>
</svg>
<div class="a" style="left:849px;top:62px;width:28px;font:bold 12.5px/14px 'Liberation Sans',sans-serif;color:#0f7d1e;text-align:center;-webkit-text-stroke:0.35px #0f7d1e;letter-spacing:-0.2px">ZUS</div>
<svg style="left:854px;top:77px" width="17" height="14">
 <rect x="0" y="0" width="17" height="14" fill="#cd4b36"/>
 <ellipse cx="5" cy="4.3" rx="1.5" ry="1.9" fill="none" stroke="#fff" stroke-width="1.2"/>
 <ellipse cx="11.9" cy="9.8" rx="1.5" ry="1.9" fill="none" stroke="#fff" stroke-width="1.2"/>
 <path d="M11.6 2.2 L5.4 11.6" stroke="#fff" stroke-width="1.2"/>
</svg>

<!-- Za km -->
<div class="a" style="left:945.5px;top:61px;font:bold 7px/7px 'Liberation Sans',sans-serif;color:#21704a">Z<span style="font-size:5.5px">a</span></div>
<div class="a" style="left:944.5px;top:67px;font:11px/10px 'Liberation Sans',sans-serif;color:#1d6a44;letter-spacing:-0.35px;-webkit-text-stroke:0.2px #1d6a44">km</div>
<!-- PIT -->
<div class="a" style="left:944px;top:82px;font:bold 7px/8px 'Liberation Sans',sans-serif;color:#ababab;letter-spacing:-0.1px">PIT</div>
<svg style="left:944px;top:89px" width="11" height="10">
 <rect x="0" y="0" width="11" height="10" fill="#787878"/>
 <circle cx="3" cy="2.6" r="1.4" fill="none" stroke="#fff" stroke-width="0.9"/>
 <circle cx="8" cy="7.4" r="1.4" fill="none" stroke="#fff" stroke-width="0.9"/>
 <path d="M7.6 1 L3.4 9" stroke="#fff" stroke-width="0.9"/>
</svg>

<!-- car -->
<svg style="left:940px;top:102px" width="20" height="20">
 <path d="M4.6 6.4 Q5 2.6 6.8 2.6 H12.8 Q14.6 2.6 15 6.4" fill="none" stroke="#333" stroke-width="1.2"/>
 <path d="M1.8 7.2 L2.6 6.6 H15.6 L16.6 7.6" fill="none" stroke="#333" stroke-width="1.2"/>
 <path d="M2.3 7.5 V12" stroke="#999" stroke-width="1"/>
 <rect x="4" y="9.2" width="3" height="2" fill="#f0883a"/>
 <path d="M3.5 12.5 H9.5" stroke="#444" stroke-width="1.1"/>
 <path d="M4.3 13.8 H7.6" stroke="#888" stroke-width="1.2"/>
 <path d="M11.8 9.8 H14.6 V12.8 H17.4 V17.4 H11.8 Z" fill="#fff" stroke="#222" stroke-width="1.2" stroke-linejoin="round"/>
 <path d="M14.6 9.8 L17.4 12.8" stroke="#222" stroke-width="1.2"/>
 <path d="M13.2 14.6 H15.9" stroke="#1a7fd0" stroke-width="1.1"/>
</svg>

<!-- Urzedy skarbowe bank -->
<svg style="left:1190px;top:60px" width="20" height="20">
 <g fill="#555">
 <path d="M2 6 L10 2 L18 6 Z"/>
 <rect x="3.3" y="7" width="3.6" height="1.1"/><rect x="4.15" y="7.5" width="1.9" height="6.3"/><rect x="3.3" y="13.2" width="3.6" height="1.1"/><rect x="8.2" y="7" width="3.6" height="1.1"/><rect x="9.05" y="7.5" width="1.9" height="6.3"/><rect x="8.2" y="13.2" width="3.6" height="1.1"/><rect x="13.1" y="7" width="3.6" height="1.1"/><rect x="13.95" y="7.5" width="1.9" height="6.3"/><rect x="13.1" y="13.2" width="3.6" height="1.1"/>
 <rect x="2" y="15" width="16" height="1.1"/><rect x="2" y="17" width="16" height="1.1"/>
 </g>
</svg>
<!-- Banki -->
<svg style="left:1190px;top:81px" width="20" height="20">
 <path d="M2.5 5.5 L9.5 1.5 L16.5 5.5 Z" fill="none" stroke="#333" stroke-width="1"/>
 <path d="M9.5 2.5 V4.5 M8.5 3.5 H10.5" stroke="#333" stroke-width="0.7"/>
 <path d="M3.5 6.5 H8" stroke="#333" stroke-width="1"/>
 <path d="M4.5 7 V15.5 M6.5 7 V15.5" stroke="#333" stroke-width="1"/>
 <path d="M2 16.5 H10" stroke="#333" stroke-width="1"/>
 <path d="M8.5 8 V13" stroke="#f08a30" stroke-width="1"/>
 <rect x="10.5" y="9.5" width="7" height="8" fill="#fff" stroke="#333" stroke-width="1"/>
 <path d="M12 11.5 H16 M12 13.5 H16 M12 15.5 H16" stroke="#1a7fd0" stroke-width="1"/>
</svg>
<!-- BR dane -->
<div class="a" style="left:1192.8px;top:104px;font:bold 9.5px/9px 'Liberation Sans',sans-serif;color:#3a8c68;letter-spacing:-0.2px">BR</div>
<div class="a" style="left:1192px;top:110px;font:9.5px/9px 'Liberation Sans',sans-serif;color:#5aa682;transform:scaleX(0.78);transform-origin:0 0;-webkit-text-stroke:0.35px #5aa682">dane</div>

<!-- filter-edit icon next to textbox -->
<svg style="left:230px;top:156px" width="22" height="22">
 <path d="M3.5 2.5 H16 V5.5 L12 9.5 V13 L7.5 17.2 V9.3 L3.5 5.5 Z" fill="#b8b8b8" stroke="#2a2a2a" stroke-width="1.1" stroke-linejoin="round"/>
 <path d="M8 17.3 L17.3 8" stroke="#2b8fd8" stroke-width="3.2" stroke-linecap="square"/>
 <path d="M8.8 16.5 L16.5 8.8" stroke="#fff" stroke-width="1"/>
</svg>

<!-- left toolbar icons -->
<svg style="left:14px;top:186px" width="20" height="20">
 <path d="M2.5 2.5 H14.8 V5.2 L11.2 9 V15.5 L9 16.5 H6.5 V9.2 L2.5 5.2 Z" fill="#c2c2c2" stroke="#222" stroke-width="1.1" stroke-linejoin="round"/>
 <path d="M11 11.5 L16.3 16.8 M16.3 11.5 L11 16.8" stroke="#fff" stroke-width="3.2"/>
 <path d="M11 11.5 L16.3 16.8 M16.3 11.5 L11 16.8" stroke="#e82424" stroke-width="1.9" stroke-linecap="round"/>
</svg>
<svg style="left:38px;top:186px" width="20" height="20">
 <path d="M2.5 2.5 H14.8 V5.2 L11.2 9 V12 H6.5 V9.2 L2.5 5.2 Z" fill="#c2c2c2" stroke="#222" stroke-width="1.1" stroke-linejoin="round"/>
 <path d="M6.5 9 V17" stroke="#222" stroke-width="1.1"/>
 <path d="M8 13.5 H17 M12.5 9 V17.8" stroke="#fff" stroke-width="2.5"/>
 <path d="M8 13.5 H17 M12.5 9 V17.8" stroke="#1aa040" stroke-width="1.1"/>
</svg>
<svg style="left:62px;top:186px" width="20" height="20">
 <path d="M1 3 H16 L14 5.5 L8.5 10 V17.8 H6 V9.5 Z" fill="#3c74bd"/>
 <path d="M11.5 7 L14.5 3.5" stroke="#fff" stroke-width="1"/>
 <rect x="8.5" y="9.5" width="8" height="8" fill="#fff" stroke="#333" stroke-width="1"/>
 <rect x="8.5" y="9.3" width="8" height="2.2" fill="#2b6fd0"/>
 <path d="M12.5 12 V17 M9 14.5 H16" stroke="#888" stroke-width="1"/>
</svg>
<svg style="left:92px;top:186px" width="20" height="20">
 <rect x="1" y="2" width="11" height="3.8" fill="#4aa87a"/>
 <path d="M4.5 5.5 V15.5" stroke="#777" stroke-width="1"/>
 <rect x="2.5" y="8.5" width="4.5" height="3" fill="#fff" stroke="#777" stroke-width="1"/>
 <rect x="2.5" y="14.5" width="4.5" height="3" fill="#fff" stroke="#777" stroke-width="1"/>
 <path d="M7 10 H9 M7 16 H9" stroke="#777" stroke-width="1"/>
 <path d="M9 8.5 H17" stroke="#4aa87a" stroke-width="1"/>
 <rect x="9.6" y="10.6" width="7" height="7" fill="#fff" stroke="#8a4fbf" stroke-width="1.3"/>
 <rect x="11" y="11" width="4.2" height="2.5" fill="#8a4fbf"/>
 <rect x="11.8" y="15.2" width="2.6" height="2.6" fill="#8a4fbf"/>
</svg>
<svg style="left:116px;top:186px" width="20" height="20">
 <rect x="1" y="2" width="11" height="3.8" fill="#4aa87a"/>
 <path d="M4.5 5.5 V15.5" stroke="#777" stroke-width="1"/>
 <rect x="2.5" y="8.5" width="4.5" height="3" fill="#fff" stroke="#777" stroke-width="1"/>
 <rect x="2.5" y="14.5" width="4.5" height="3" fill="#fff" stroke="#777" stroke-width="1"/>
 <path d="M7 10 H9 M7 16 H9" stroke="#777" stroke-width="1"/>
 <rect x="9.2" y="8.5" width="7.6" height="3.3" fill="#4aa87a"/>
 <rect x="9.2" y="14.2" width="7.6" height="3.6" fill="#4aa87a"/>
 <path d="M11.5 1.8 H13.5 L17 5.2 V10.5 L14.5 9.5 L12 6 Z" fill="#3a74c0"/>
 <path d="M11.5 10 Q13.5 11.5 16 10.5" fill="none" stroke="#fff" stroke-width="0.9"/>
</svg>
<svg style="left:140px;top:186px" width="20" height="20">
 <path d="M1.5 17.8 L6.7 12.6" stroke="#222" stroke-width="1.2" stroke-linecap="round"/>
 <path d="M3.3 8.6 L10.5 15.6 L11.4 11.3 L13.6 9.1 L16.7 8.4 L11 2.5 L10.5 5.6 L8.1 7.9 Z" fill="#fff" stroke="#222" stroke-width="1.2" stroke-linejoin="round"/>
</svg>
<svg style="left:162px;top:186px" width="20" height="20">
 <rect x="1" y="2" width="11" height="3.8" fill="#3a6fbb"/>
 <path d="M4.5 5.5 V15.5" stroke="#777" stroke-width="1"/>
 <rect x="2.5" y="8.5" width="4.5" height="3" fill="#fff" stroke="#777" stroke-width="1"/>
 <rect x="2.5" y="14.5" width="4.5" height="3" fill="#fff" stroke="#777" stroke-width="1"/>
 <path d="M7 10 H9 M7 16 H9" stroke="#777" stroke-width="1"/>
 <rect x="9" y="8.3" width="8" height="3.4" fill="#3a6fbb"/>
 <rect x="9" y="14.3" width="8" height="3.5" fill="#3a6fbb"/>
</svg>

<!-- header filter glyph -->
<svg style="left:451px;top:185px" width="9" height="9">
 <path d="M1 1.5 L3 1.5 L4.5 2.5 L6 2.5 L7 1 L7.5 2 L6 4 V6.5 L4.5 7.5 V4 Z" fill="#999"/>
</svg>

</body></html>
